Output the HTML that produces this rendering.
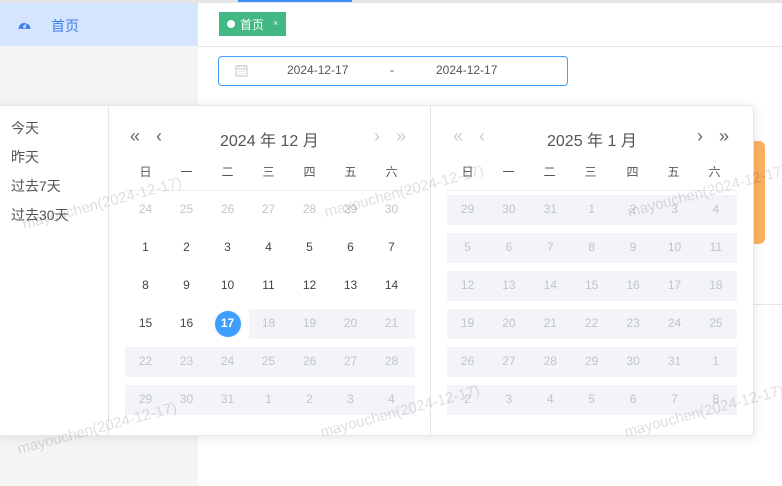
<!DOCTYPE html>
<html><head><meta charset="utf-8"><style>
*{box-sizing:border-box;margin:0;padding:0}
body{width:782px;height:486px;overflow:hidden;position:relative;background:#fff;font-family:"Liberation Sans","Noto Sans CJK SC",sans-serif;color:#333}
.abs{position:absolute}
.side{left:0;top:0;width:198px;height:486px;background:#f5f5f6}
.act{left:0;top:3px;width:198px;height:43px;background:#d5e5fd}
.band{position:absolute;background:#f3f4f8;height:30px}
.c{position:absolute;width:41px;text-align:center;font-size:12px;line-height:30px;color:#444}
.g{color:#c0c4cc}
.wk{position:absolute;width:41px;text-align:center;font-size:12px;color:#555;top:163px}
.wm{position:absolute;font-size:15px;color:rgba(0,0,0,0.13);transform:rotate(-15deg);white-space:nowrap;transform-origin:center}
.ar{position:absolute;font-size:18px;line-height:20px;top:126px}
</style></head><body>
<div class="abs side"></div>
<div class="abs" style="left:0;top:0;width:782px;height:3px;background:#e4e4e4"></div>
<div class="abs" style="left:238px;top:0;width:114px;height:2px;background:#3d8ef8"></div>
<div class="abs act"></div>
<svg class="abs" style="left:18px;top:19px" width="13" height="11" viewBox="0 0 12 10"><path d="M0.5 9 A5.5 5.5 0 1 1 11.5 9 Z" fill="#3d7ff0"/><circle cx="6" cy="7" r="1.3" fill="#d5e5fd"/><path d="M6 7 L8 3.5" stroke="#d5e5fd" stroke-width="1"/></svg>
<div class="abs" style="left:51px;top:16px;font-size:14px;color:#3d7ff0">首页</div>
<div class="abs" style="left:198px;top:46px;width:584px;height:1px;background:#e6e6e6"></div>
<div class="abs" style="left:219px;top:12px;width:67px;height:24px;background:#42b983;border:1px solid #42b983"></div>
<div class="abs" style="left:227px;top:20px;width:8px;height:8px;border-radius:50%;background:#fff"></div>
<div class="abs" style="left:240px;top:16px;font-size:12px;color:#fff">首页</div>
<div class="abs" style="left:273px;top:18px;font-size:9px;color:#e8f5ee">×</div>
<div class="abs" style="left:218px;top:56px;width:350px;height:30px;border:1px solid #409eff;border-radius:4px"></div>
<svg class="abs" style="left:235px;top:64px" width="13" height="13" viewBox="0 0 13 13" fill="none" stroke="#c0c4cc"><rect x="1" y="2" width="11" height="10"/><path d="M1 5h11M4 1v2M9 1v2M3.5 7.5h1M6 7.5h1M8.5 7.5h1M3.5 9.5h1M6 9.5h1M8.5 9.5h1"/></svg>
<div class="abs" style="left:287px;top:63px;font-size:12px;color:#555">2024-12-17</div>
<div class="abs" style="left:390px;top:63px;font-size:12px;color:#555">-</div>
<div class="abs" style="left:436px;top:63px;font-size:12px;color:#555">2024-12-17</div>
<div class="abs" style="left:753px;top:141px;width:12px;height:103px;background:#fbb15f;border-radius:0 6px 6px 0"></div>
<div class="abs" style="left:753px;top:304px;width:29px;height:1px;background:#e6e6e6"></div>
<div class="abs" style="left:-1px;top:105px;width:755px;height:331px;background:#fff;border:1px solid #e4e7ed;border-radius:0 4px 4px 0;box-shadow:0 2px 12px rgba(0,0,0,0.1)"></div>
<div class="abs" style="left:108px;top:106px;width:1px;height:329px;background:#e4e7ed"></div>
<div class="abs" style="left:430px;top:106px;width:1px;height:329px;background:#e4e7ed"></div>
<div class="abs" style="left:11px;top:114px;font-size:14px;color:#555;line-height:29px">今天<br>昨天<br>过去7天<br>过去30天</div>
<div class="ar" style="left:130px;color:#666">«</div><div class="ar" style="left:156px;color:#666">‹</div>
<div class="abs" style="left:220px;top:127px;font-size:16px;color:#555">2024 年 12 月</div>
<div class="ar" style="left:374px;color:#ccc">›</div><div class="ar" style="left:396px;color:#ccc">»</div>
<div class="ar" style="left:453px;color:#ccc">«</div><div class="ar" style="left:479px;color:#ccc">‹</div>
<div class="abs" style="left:547px;top:127px;font-size:16px;color:#555">2025 年 1 月</div>
<div class="ar" style="left:697px;color:#666">›</div><div class="ar" style="left:719px;color:#666">»</div>
<div class="abs" style="left:125px;top:190px;width:290px;height:1px;background:#ebeef5"></div>
<div class="abs" style="left:447px;top:190px;width:290px;height:1px;background:#ebeef5"></div>
<div class="band" style="left:249px;top:309px;width:166px"></div>
<div class="band" style="left:125px;top:347px;width:290px"></div>
<div class="band" style="left:125px;top:385px;width:290px"></div>
<div class="band" style="left:447px;top:195px;width:290px"></div>
<div class="band" style="left:447px;top:233px;width:290px"></div>
<div class="band" style="left:447px;top:271px;width:290px"></div>
<div class="band" style="left:447px;top:309px;width:290px"></div>
<div class="band" style="left:447px;top:347px;width:290px"></div>
<div class="band" style="left:447px;top:385px;width:290px"></div>
<div class="abs" style="left:214px;top:310px;width:28px;height:28px;border-radius:50%;background:#ecf5ff"></div>
<div class="abs" style="left:215px;top:311px;width:26px;height:26px;border-radius:50%;background:#409eff"></div>
<div class="wk" style="left:125px">日</div><div class="wk" style="left:166px">一</div><div class="wk" style="left:207px">二</div><div class="wk" style="left:248px">三</div><div class="wk" style="left:289px">四</div><div class="wk" style="left:330px">五</div><div class="wk" style="left:371px">六</div>
<div class="wk" style="left:447px">日</div><div class="wk" style="left:488px">一</div><div class="wk" style="left:529px">二</div><div class="wk" style="left:570px">三</div><div class="wk" style="left:612px">四</div><div class="wk" style="left:653px">五</div><div class="wk" style="left:694px">六</div>
<div id="cells"></div>
<script>
var h='';
var L=[[24,25,26,27,28,29,30],[1,2,3,4,5,6,7],[8,9,10,11,12,13,14],[15,16,17,18,19,20,21],[22,23,24,25,26,27,28],[29,30,31,1,2,3,4]];
var R=[[29,30,31,1,2,3,4],[5,6,7,8,9,10,11],[12,13,14,15,16,17,18],[19,20,21,22,23,24,25],[26,27,28,29,30,31,1],[2,3,4,5,6,7,8]];
for(var r=0;r<6;r++)for(var c=0;c<7;c++){
 var g=(r==0)||(r==3&&c>2)||r>3;var s='';
 if(r==3&&c==2)s='color:#fff;font-weight:bold;';
 h+='<div class="c'+(g?' g':'')+'" style="'+s+'left:'+(125+c*41)+'px;top:'+(194+r*38)+'px">'+L[r][c]+'</div>';
 h+='<div class="c g" style="left:'+(447+c*41.4)+'px;top:'+(194+r*38)+'px">'+R[r][c]+'</div>';
}
document.getElementById('cells').innerHTML=h;
</script>
<div class="wm" style="left:20px;top:195px">mayouchen(2024-12-17)</div>
<div class="wm" style="left:322px;top:183px">mayouchen(2024-12-17)</div>
<div class="wm" style="left:625px;top:183px">mayouchen(2024-12-17)</div>
<div class="wm" style="left:15px;top:420px">mayouchen(2024-12-17)</div>
<div class="wm" style="left:318px;top:403px">mayouchen(2024-12-17)</div>
<div class="wm" style="left:622px;top:403px">mayouchen(2024-12-17)</div>
</body></html>
